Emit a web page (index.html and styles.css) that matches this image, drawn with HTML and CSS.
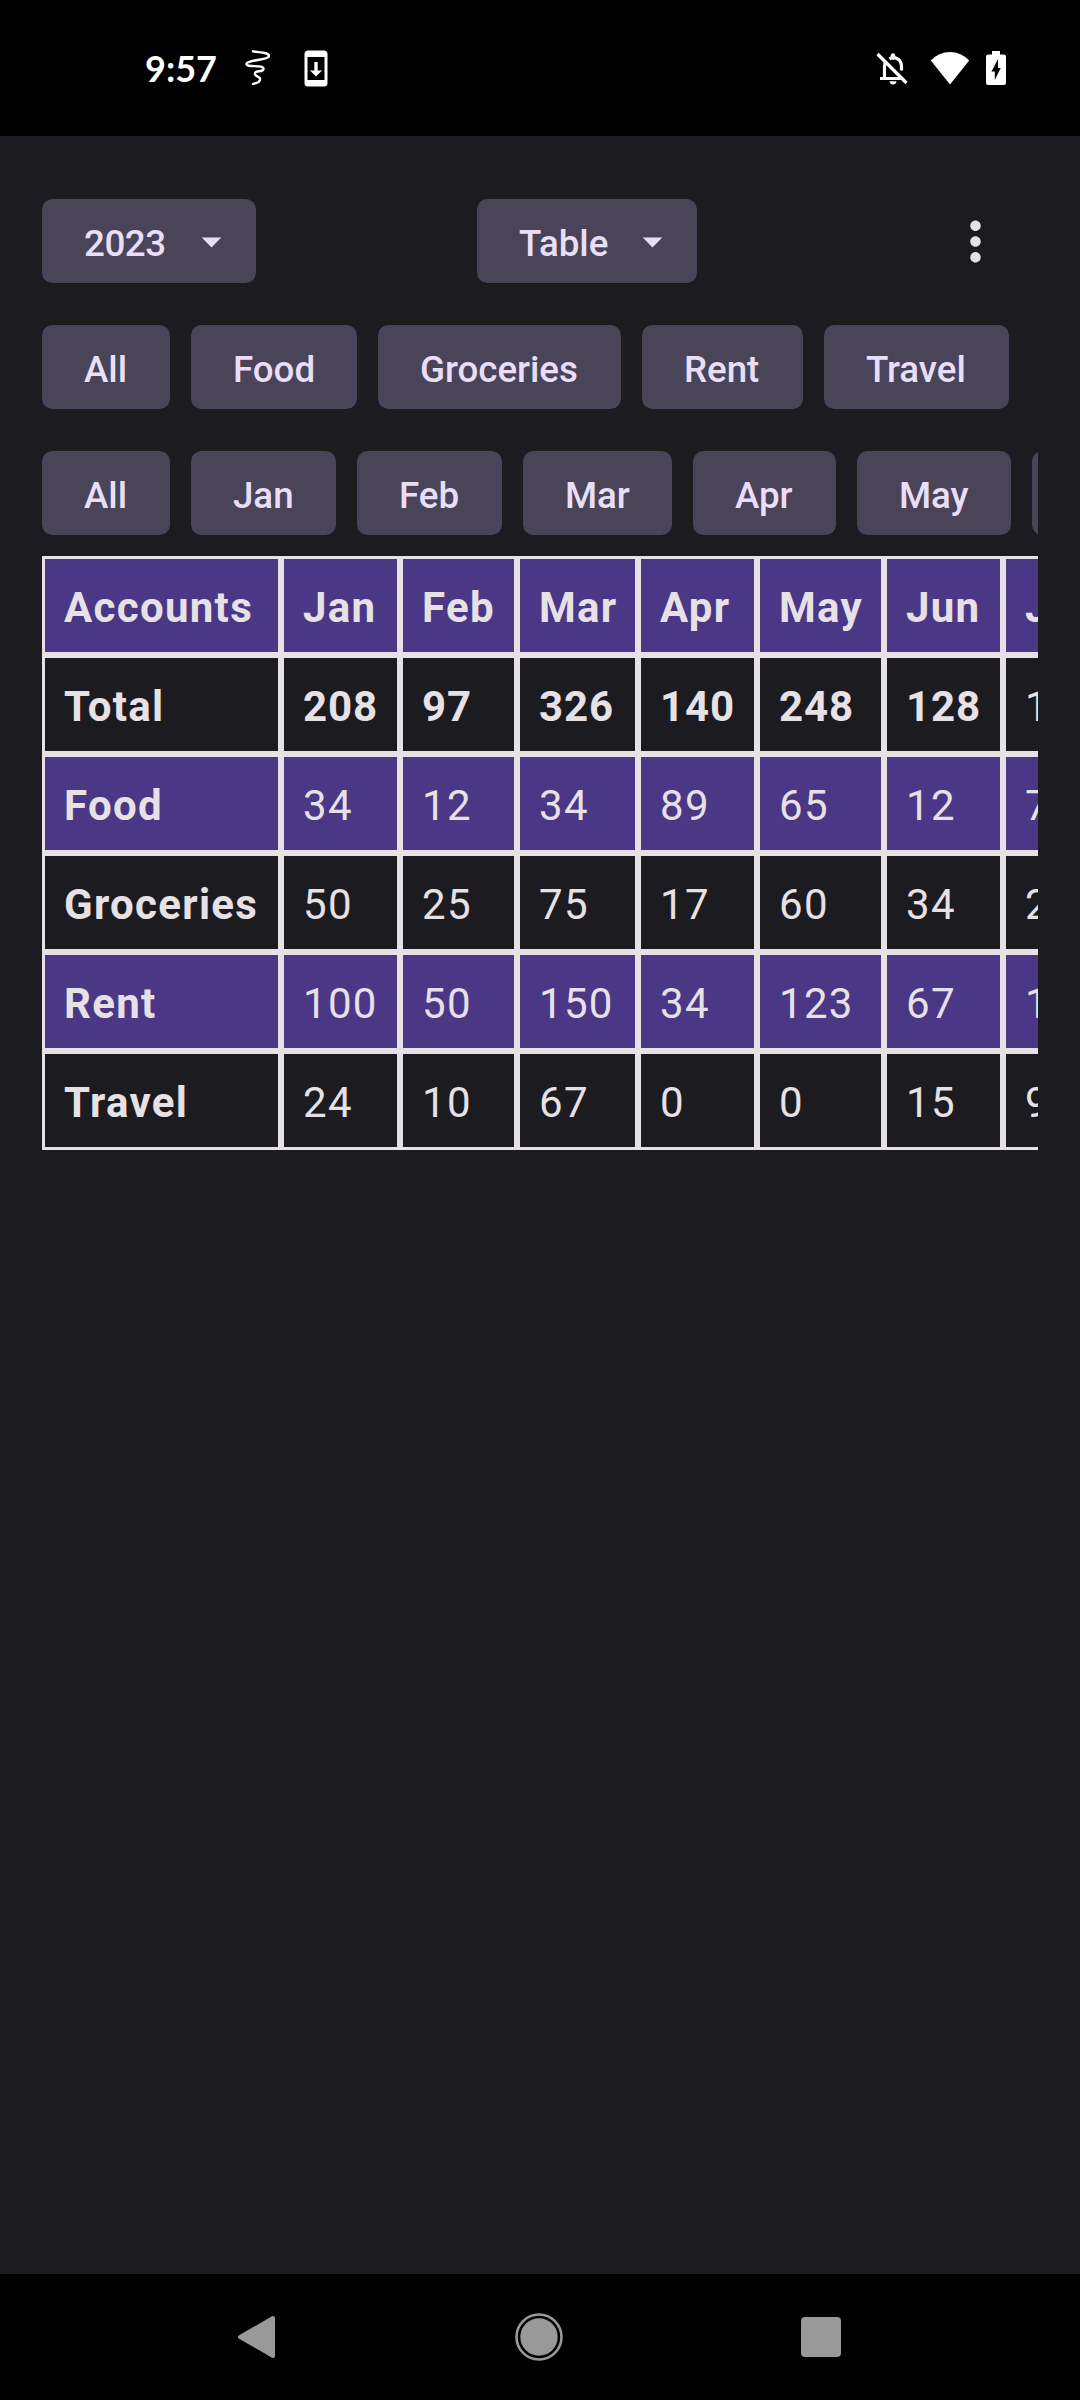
FILE: index.html
```html
<!DOCTYPE html>
<html lang="en">
<head>
<meta charset="utf-8">
<title>Accounts</title>
<link rel="stylesheet" href="styles.css">
</head>
<body>
<header class="status">
  <div class="status-left">
    <span class="clock">9:57</span>
    <svg class="squiggle" width="26" height="38" viewBox="0 0 26 38" fill="none" stroke="#fff" stroke-width="2.400" stroke-linecap="round" stroke-linejoin="round"><path d="M8 2.300C13 3.500 24 3 24 7C24 11 1.500 11 1.500 15C1.500 19 19 15 18.500 20C18 24 9.500 20.500 10 25C10.500 28.500 16 27 15 31C14 34.500 11 33.500 8 35"/></svg>
    <svg class="update" width="24" height="37" viewBox="0 0 24 37"><path fill="#fff" fill-rule="evenodd" d="M4 .5H20Q23.500 .5 23.500 4V33Q23.500 36.500 20 36.500H4Q.5 36.500 .5 33V4Q.5 .5 4 .5ZM3.500 7V30H20.500V7ZM10.300 12H13.700V20.500H18L12 26.500L6 20.500H10.300Z"/></svg>
  </div>
  <div class="status-right">
    <svg width="34" height="34" viewBox="0 0 34 34" fill="none" stroke="#fff" stroke-width="3.200"><path d="M4 27.500H27M8.500 27V15.500Q8.500 12.500 10 10.500M13.500 7.800Q17 5.800 20.500 7.300Q25.500 9.500 25.500 15.500V19.500"/><path d="M17 6.500V4.500" stroke-linecap="round" stroke-width="4.500"/><path d="M13.500 30.300H20.500Q20 33.500 17 33.500T13.500 30.300Z" fill="#fff" stroke="none"/><path d="M1.500 3L30.500 32"/></svg>
    <svg class="wifi" width="40" height="34" viewBox="0 0 40 34"><path fill="#fff" d="M.8 9.500Q9 1 20 1T39.200 9.500L20 33.500Z"/></svg>
    <svg class="battery" width="20" height="34" viewBox="0 0 20 34"><path fill="#fff" fill-rule="evenodd" d="M6 0H14V3.500H18Q20 3.500 20 5.500V32Q20 34 18 34H2Q0 34 0 32V5.500Q0 3.500 2 3.500H6ZM12 8L5.500 20.500H8.800V29L14.700 17H12Z"/></svg>
  </div>
</header>
<main class="app">
  <div class="toolbar">
    <button class="chip select year">2023<svg width="47" height="47" viewBox="0 0 24 24"><path fill="currentColor" d="M7 10l5 5 5-5z"/></svg></button>
    <button class="chip select view">Table<svg width="47" height="47" viewBox="0 0 24 24"><path fill="currentColor" d="M7 10l5 5 5-5z"/></svg></button>
    <button class="more" aria-label="More"><svg width="63" height="63" viewBox="0 0 24 24"><path fill="currentColor" d="M12 8c1.100 0 2-.9 2-2s-.9-2-2-2-2 .9-2 2 .9 2 2 2zm0 2c-1.100 0-2 .9-2 2s.9 2 2 2 2-.9 2-2-.9-2-2-2zm0 6c-1.100 0-2 .9-2 2s.9 2 2 2 2-.9 2-2-.9-2-2-2z"/></svg></button>
  </div>
  <div class="chips categories">
    <button class="chip">All</button><button class="chip">Food</button><button class="chip">Groceries</button><button class="chip">Rent</button><button class="chip">Travel</button>
  </div>
  <div class="chips months">
    <button class="chip">All</button><button class="chip">Jan</button><button class="chip">Feb</button><button class="chip">Mar</button><button class="chip">Apr</button><button class="chip">May</button><button class="chip">Jun</button>
  </div>
  <div class="table-scroll">
    <div class="table">
      <div class="row head"><span>Accounts</span><span>Jan</span><span>Feb</span><span>Mar</span><span>Apr</span><span>May</span><span>Jun</span><span>Jul</span></div>
      <div class="row total"><span>Total</span><span>208</span><span>97</span><span>326</span><span>140</span><span>248</span><span>128</span><span>1</span></div>
      <div class="row"><span>Food</span><span>34</span><span>12</span><span>34</span><span>89</span><span>65</span><span>12</span><span>7</span></div>
      <div class="row"><span>Groceries</span><span>50</span><span>25</span><span>75</span><span>17</span><span>60</span><span>34</span><span>2</span></div>
      <div class="row"><span>Rent</span><span>100</span><span>50</span><span>150</span><span>34</span><span>123</span><span>67</span><span>1</span></div>
      <div class="row"><span>Travel</span><span>24</span><span>10</span><span>67</span><span>0</span><span>0</span><span>15</span><span>9</span></div>
    </div>
  </div>
</main>
<nav class="navbar">
  <svg width="40" height="56" viewBox="0 0 40 56"><path fill="#999" stroke="#999" stroke-width="4" stroke-linejoin="round" d="M3 28L36 9V47Z"/></svg>
  <svg width="48" height="48" viewBox="0 0 48 48"><circle cx="24" cy="24" r="22.500" fill="none" stroke="#999" stroke-width="2.600"/><circle cx="24" cy="24" r="18.700" fill="#999"/></svg>
  <svg width="40" height="40" viewBox="0 0 40 40"><rect width="40" height="40" rx="4" fill="#999"/></svg>
</nav>
</body>
</html>
```
FILE: styles.css
```css
* { box-sizing: border-box; }
body {
  margin: 0;
  width: 1080px;
  height: 2400px;
  display: flex;
  flex-direction: column;
  background: #1c1b1f;
  color: #e6e1e5;
  font-family: Roboto, sans-serif;
  overflow: hidden;
}
svg { display: block; flex: none; }
button { border: 0; margin: 0; font: inherit; }

.status {
  height: 136px;
  flex: none;
  background: #000;
  color: #fff;
  display: flex;
  justify-content: space-between;
  padding: 0 74px 0 145px;
}
.status-left, .status-right { display: flex; align-items: center; }
.clock { width: 100px; font: 700 36px/42px Lato, sans-serif; }
.squiggle { margin-right: 33px; }
.status-right svg:first-child { margin-right: 20px; }
.wifi { margin-right: 16px; }

.app {
  flex: 1;
  min-height: 0;
  padding: 63px 42px 0;
  display: flex;
  flex-direction: column;
}
.toolbar {
  display: flex;
  align-items: center;
  margin-bottom: 42px;
  padding-right: 31px;
}
.chip {
  height: 84px;
  padding: 4px 0 0 42px;
  border-radius: 10.500px;
  background: #4a4458;
  color: #e8def8;
  font-size: 36.750px;
  font-weight: 500;
  letter-spacing: -0.050px;
  text-align: left;
  white-space: nowrap;
}
.select {
  display: flex;
  align-items: center;
  justify-content: space-between;
  padding-right: 21px;
}
.select svg { margin-top: -4px; }
.year { width: 214px; letter-spacing: -0.500px; }
.view { width: 220px; margin-left: 221px; }
.more { padding: 0; margin-left: auto; background: none; color: inherit; }
.chips {
  display: grid;
  gap: 21px;
  overflow: hidden;
}
.categories { grid-template-columns: 128px 166px 243px 161px 185px; margin-bottom: 42px; }
.months { grid-template-columns: 128px 145px 145px 149px 143px 154px 146px; margin-bottom: 21px; }

.table-scroll { overflow: hidden; }
.table { width: 1080px; }
.row {
  display: grid;
  grid-template-columns: 239px 119px 117px 121px 119px 127px 119px 119px;
}
.row span {
  height: 99px;
  border: 3px solid #e6e1e5;
  padding: 4px 0 0 19px;
  font-size: 42px;
  line-height: 89px;
  letter-spacing: 1.310px;
}
.row:nth-child(odd) span { background: #4a3785; }
.row.head span, .row.total span, .row span:first-child { font-weight: 700; }
.row.total span:not(:first-child) { letter-spacing: 0.900px; }
.row.total span:last-child { font-weight: 400; }

.navbar {
  height: 126px;
  flex: none;
  background: #000;
  display: flex;
  align-items: center;
  justify-content: space-between;
  padding: 0 239px 0 237px;
}
```
